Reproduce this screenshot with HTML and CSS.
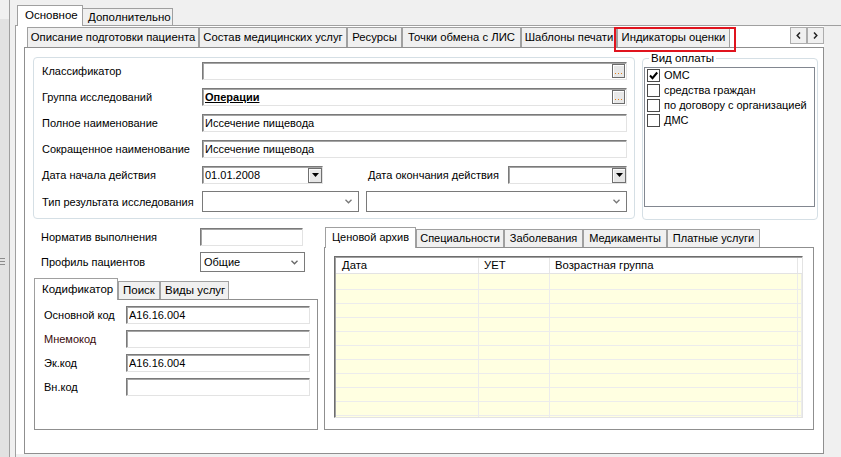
FILE: index.html
```html
<!DOCTYPE html>
<html>
<head>
<meta charset="utf-8">
<link rel="stylesheet" href="styles.css">
</head>
<body>
<div class="app">
  <div class="splitter"><div class="grip"></div></div>
  <div class="outer">
    <div class="otabs">
      <div class="otab active">Основное</div>
      <div class="otab second">Дополнительно</div>
    </div>
    <div class="opage">
      <div class="itabctl">
        <div class="itabs">
          <div class="itab t1">Описание подготовки пациента</div>
          <div class="itab t2">Состав медицинских услуг</div>
          <div class="itab t3">Ресурсы</div>
          <div class="itab t4">Точки обмена с ЛИС</div>
          <div class="itab t5">Шаблоны печати</div>
          <div class="itab t6">Индикаторы оценки</div>
          <div class="scroll">
            <div class="sbtn"><svg width="5" height="7" viewBox="0 0 5 7"><polyline points="4,0.5 1.2,3.5 4,6.5" fill="none" stroke="#222" stroke-width="1.5"/></svg></div>
            <div class="sbtn"><svg width="5" height="7" viewBox="0 0 5 7"><polyline points="1,0.5 3.8,3.5 1,6.5" fill="none" stroke="#222" stroke-width="1.5"/></svg></div>
          </div>
        </div>
        <div class="ipage">
          <div class="toprow">
            <div class="group1">
              <div class="frow">
                <div class="lbl">Классификатор</div>
                <div class="inp grow"><span class="val"></span><span class="ellip"><span class="dots"></span></span></div>
              </div>
              <div class="frow">
                <div class="lbl">Группа исследований</div>
                <div class="inp grow"><span class="val bold">Операции</span><span class="ellip"><span class="dots"></span></span></div>
              </div>
              <div class="frow">
                <div class="lbl">Полное наименование</div>
                <div class="inp grow"><span class="val">Иссечение пищевода</span></div>
              </div>
              <div class="frow">
                <div class="lbl">Сокращенное наименование</div>
                <div class="inp grow"><span class="val">Иссечение пищевода</span></div>
              </div>
              <div class="frow">
                <div class="lbl">Дата начала действия</div>
                <div class="inp date1"><span class="val">01.01.2008</span><span class="ddbtn"><svg width="7" height="4" viewBox="0 0 7 4"><polygon points="0,0 7,0 3.5,4" fill="#000"/></svg></span></div>
                <div class="lbl2">Дата окончания действия</div>
                <div class="inp grow"><span class="val"></span><span class="ddbtn"><svg width="7" height="4" viewBox="0 0 7 4"><polygon points="0,0 7,0 3.5,4" fill="#000"/></svg></span></div>
              </div>
              <div class="frow crow">
                <div class="lbl">Тип результата исследования</div>
                <div class="combo c1"><span class="val"></span><svg class="chev" width="7" height="5" viewBox="0 0 7 5"><polyline points="0.5,0.8 3.5,3.8 6.5,0.8" fill="none" stroke="#777" stroke-width="1.3"/></svg></div>
                <div class="combo grow c2"><span class="val"></span><svg class="chev" width="7" height="5" viewBox="0 0 7 5"><polyline points="0.5,0.8 3.5,3.8 6.5,0.8" fill="none" stroke="#777" stroke-width="1.3"/></svg></div>
              </div>
            </div>
            <fieldset class="pay">
              <legend>Вид оплаты</legend>
              <div class="lb">
                <div class="lbi"><span class="cb"><svg width="11" height="11" viewBox="0 0 11 11"><polyline points="2,5.5 4.5,8.2 9.2,2.5" fill="none" stroke="#000" stroke-width="2"/></svg></span><span class="lbt">ОМС</span></div>
                <div class="lbi"><span class="cb"></span><span class="lbt">средства граждан</span></div>
                <div class="lbi"><span class="cb"></span><span class="lbt">по договору с организацией</span></div>
                <div class="lbi"><span class="cb"></span><span class="lbt">ДМС</span></div>
              </div>
            </fieldset>
          </div>
          <div class="bottomrow">
            <div class="leftcol">
              <div class="frow r1">
                <div class="lbl lw">Норматив выполнения</div>
                <div class="inp norm"><span class="val"></span></div>
              </div>
              <div class="frow r2">
                <div class="lbl lw">Профиль пациентов</div>
                <div class="combo prof"><span class="val">Общие</span><svg class="chev" width="7" height="5" viewBox="0 0 7 5"><polyline points="0.5,0.8 3.5,3.8 6.5,0.8" fill="none" stroke="#666" stroke-width="1.3"/></svg></div>
              </div>
              <div class="stabs">
                <div class="stab sel s1">Кодификатор</div>
                <div class="stab s2">Поиск</div>
                <div class="stab s3">Виды услуг</div>
              </div>
              <div class="spage">
                <div class="crow2">
                  <div class="clbl">Основной код</div>
                  <div class="inp code"><span class="val">A16.16.004</span></div>
                </div>
                <div class="crow2">
                  <div class="clbl maroon">Мнемокод</div>
                  <div class="inp code"><span class="val"></span></div>
                </div>
                <div class="crow2">
                  <div class="clbl">Эк.код</div>
                  <div class="inp code"><span class="val">A16.16.004</span></div>
                </div>
                <div class="crow2">
                  <div class="clbl">Вн.код</div>
                  <div class="inp code"><span class="val"></span></div>
                </div>
              </div>
            </div>
            <div class="rtabctl">
              <div class="rtabs">
                <div class="rtab sel q1">Ценовой архив</div>
                <div class="rtab q2">Специальности</div>
                <div class="rtab q3">Заболевания</div>
                <div class="rtab q4">Медикаменты</div>
                <div class="rtab q5">Платные услуги</div>
              </div>
              <div class="rpage">
                <div class="grid">
                  <div class="ghead">
                    <div class="gc k1">Дата</div>
                    <div class="gc k2">УЕТ</div>
                    <div class="gc k3">Возрастная группа</div>
                    <div class="gc k4"></div>
                  </div>
                  <div class="grow-r first"><div class="gc k1"></div><div class="gc k2"></div><div class="gc k3"></div><div class="gc k4"></div></div>
                  <div class="grow-r"><div class="gc k1"></div><div class="gc k2"></div><div class="gc k3"></div><div class="gc k4"></div></div>
                  <div class="grow-r"><div class="gc k1"></div><div class="gc k2"></div><div class="gc k3"></div><div class="gc k4"></div></div>
                  <div class="grow-r"><div class="gc k1"></div><div class="gc k2"></div><div class="gc k3"></div><div class="gc k4"></div></div>
                  <div class="grow-r"><div class="gc k1"></div><div class="gc k2"></div><div class="gc k3"></div><div class="gc k4"></div></div>
                  <div class="grow-r"><div class="gc k1"></div><div class="gc k2"></div><div class="gc k3"></div><div class="gc k4"></div></div>
                  <div class="grow-r"><div class="gc k1"></div><div class="gc k2"></div><div class="gc k3"></div><div class="gc k4"></div></div>
                  <div class="grow-r"><div class="gc k1"></div><div class="gc k2"></div><div class="gc k3"></div><div class="gc k4"></div></div>
                  <div class="grow-r"><div class="gc k1"></div><div class="gc k2"></div><div class="gc k3"></div><div class="gc k4"></div></div>
                  <div class="grow-r"><div class="gc k1"></div><div class="gc k2"></div><div class="gc k3"></div><div class="gc k4"></div></div>
                  <div class="grow-r"><div class="gc k1"></div><div class="gc k2"></div><div class="gc k3"></div><div class="gc k4"></div></div>
                </div>
              </div>
            </div>
          </div>
        </div>
      </div>
    </div>
  </div>
</div>
<div class="hl"></div>
</body>
</html>
```

FILE: styles.css
```css
* { box-sizing: border-box; }
html, body { margin: 0; padding: 0; }
body {
  width: 841px; height: 457px; overflow: hidden; position: relative;
  background: #f0f0f0;
  font-family: "Liberation Sans", Arial, sans-serif;
  font-size: 11px; color: #000;
}
.app { display: flex; height: 457px; }
.splitter {
  width: 10px; flex: none;
  background: linear-gradient(#f0f0f0 0 19px, #e2e2e2 19px);
  border-right: 1px solid #a0a0a0;
}
.grip {
  margin-top: 258px; width: 5px; height: 7px;
  background: repeating-linear-gradient(to bottom, #8c8c8c 0 1px, transparent 1px 3px);
}
.outer { flex: 1; display: flex; flex-direction: column; padding-left: 5px; min-width: 0; }
.otabs { height: 25px; flex: none; display: flex; align-items: flex-end; padding-left: 2px; }
.otab {
  height: 17px; border: 1px solid #a0a0a0; border-bottom: none;
  background: #f0f0f0; font-size: 11.5px; line-height: 16px; white-space: nowrap;
}
.otab.active {
  height: 21px; width: 66px; margin-bottom: -1px; padding-left: 7px; line-height: 19px;
  background: #fff; position: relative; z-index: 2;
}
.otab.second { width: 91px; margin-left: -1px; padding-left: 5px; }
.opage {
  flex: 1; border-top: 1px solid #a0a0a0; border-left: 1px solid #a0a0a0;
  background: #f0f0f0;
}
.itabctl {
  width: 808px; height: 428px; background: #fff;
  padding: 1px 0 0 8px; display: flex; flex-direction: column;
}
.itabs { display: flex; height: 20px; flex: none; padding-left: 3px; }
.itab {
  height: 20px; border: 1px solid #a0a0a0; border-bottom: none; background: #f0f0f0;
  font-size: 11.3px; line-height: 19px; text-align: center; white-space: nowrap;
}
.t1 { width: 172px; } .t2 { width: 148px; } .t3 { width: 55px; }
.t4 { width: 119px; } .t5 { width: 96px; } .t6 { width: 113px; }
.scroll { margin-left: auto; display: flex; align-items: flex-start; }
.sbtn {
  width: 17px; height: 17px; border: 1px solid #adadad; background: #f0f0f0;
  display: flex; align-items: center; justify-content: center;
}
.ipage { width: 800px; height: 407px; border: 1px solid #8f8f8f; background: #fff; flex: none; }

.toprow { display: flex; align-items: flex-start; height: 172px; }
.group1 {
  margin: 9px 0 0 8px; width: 602px; height: 162px;
  border: 1px solid #d5dfe5; border-radius: 4px;
  padding: 4px 7px 0 8px;
  display: flex; flex-direction: column; gap: 8px;
}
.frow { display: flex; align-items: center; height: 18px; }
.frow.crow { height: 21px; margin-top: -1px; }
.lbl { width: 160px; flex: none; white-space: nowrap; }
.lbl2 { width: 140px; margin-left: 45px; flex: none; white-space: nowrap; }
.grow { flex: 1; min-width: 0; }
.inp {
  height: 18px; background: #fff;
  border: 1px solid; border-color: #7a7a7a #e3e3e3 #e3e3e3 #7a7a7a;
  box-shadow: inset 1px 1px 0 #a5a5a5;
  display: flex; align-items: center; padding-left: 2px;
}
.val { flex: 1; white-space: nowrap; overflow: hidden; }
.bold { font-weight: bold; text-decoration: underline; }
.ellip {
  width: 13px; height: 14px; margin-right: 1px; flex: none;
  border: 1px solid #6d6d6d; box-shadow: inset 1px 1px 0 #fff;
  background: #e8e8e8; display: flex; align-items: flex-end; justify-content: center;
  padding-bottom: 3px;
}
.dots {
  width: 7px; height: 1px;
  background: repeating-linear-gradient(90deg, #e0801c 0 1px, transparent 1px 3px);
}
.date1 { width: 121px; flex: none; }
.ddbtn {
  width: 14px; height: 15px; margin-right: 0; flex: none;
  border: 1px solid #707070; background: #e6e6e6;
  box-shadow: inset 1px 1px 0 #fafafa;
  display: flex; align-items: center; justify-content: center;
}
.combo {
  height: 21px; border: 1px solid #7a7a7a; background: #fff;
  display: flex; align-items: center; padding: 0 6px 0 3px;
}
.c1 { width: 157px; flex: none; }
.c2 { margin-left: 7px; }
.chev { flex: none; }

.pay {
  margin: 4px 0 0 7px; width: 176px; height: 168px;
  border: 1px solid #d5dfe5; border-radius: 4px;
  padding: 0 2px 0 1px; min-width: 0;
}
.pay legend { padding: 0 2px; margin-left: 5px; font-size: 11.5px; line-height: 12px; }
.lb { margin-top: 3px; height: 140px; border: 1px solid #828790; background: #fff; }
.lbi { height: 15px; display: flex; align-items: flex-start; padding-left: 2px; }
.cb {
  width: 13px; height: 13px; margin-top: 1px; border: 1px solid #4a4a4a; background: #fff;
  display: flex; align-items: center; justify-content: center; flex: none;
}
.lbt { margin-left: 4px; line-height: 15px; white-space: nowrap; }

.bottomrow { display: flex; align-items: flex-start; margin-top: 7px; }
.leftcol { margin-left: 8px; width: 285px; flex: none; display: flex; flex-direction: column; }
.leftcol .frow { height: auto; }
.r1 { margin-top: 1px; }
.r2 { margin-top: 6px; }
.lw { width: 167px; padding-left: 8px; }
.norm { width: 103px; }
.prof { width: 105px; height: 20px; }
.stabs { display: flex; align-items: flex-end; height: 21px; margin: 6px 0 0 1px; }
.stab {
  height: 18px; border: 1px solid #a0a0a0; border-bottom: none; background: #f0f0f0;
  font-size: 11.5px; line-height: 17px; padding-left: 4px; white-space: nowrap;
}
.stab.sel {
  height: 22px; margin-bottom: -1px; background: #fff; position: relative; z-index: 2;
  line-height: 20px; padding-left: 7px;
}
.s1 { width: 84px; } .s2 { width: 42px; } .s3 { width: 69px; padding-left: 4px; }
.spage {
  margin-left: 1px; width: 284px; height: 131px; border: 1px solid #8f8f8f;
  padding: 6px 0 0 9px; display: flex; flex-direction: column; gap: 6px;
}
.crow2 { display: flex; align-items: center; height: 18px; }
.clbl { width: 82px; flex: none; white-space: nowrap; }
.maroon { color: #3a0a0a; }
.code { width: 184px; }

.rtabctl { margin-left: 6px; width: 490px; flex: none; display: flex; flex-direction: column; }
.rtabs { display: flex; align-items: flex-end; height: 20px; margin-left: 1px; }
.rtab {
  height: 18px; border: 1px solid #a0a0a0; border-bottom: none; background: #f0f0f0;
  font-size: 11px; line-height: 17px; text-align: center; white-space: nowrap;
}
.rtab.sel {
  height: 21px; margin-bottom: -1px; background: #fff; position: relative; z-index: 2;
  line-height: 19px;
}
.q1 { width: 91px; } .q2 { width: 88px; } .q3 { width: 79px; } .q4 { width: 84px; } .q5 { width: 93px; }
.rpage {
  width: 490px; height: 183px; border: 1px solid #8f8f8f; background: #fff;
  padding: 8px 0 0 9px;
}
.grid {
  width: 469px; height: 162px; overflow: hidden; background: #ffffe1;
  border: 1px solid; border-color: #6d6d6d #e3e3e3 #e3e3e3 #6d6d6d;
  box-shadow: inset 1px 1px 0 #a0a0a0;
  padding: 1px 0 0 1px;
}
.ghead { display: flex; height: 16px; background: #fff; border-bottom: 1px solid #e3e3e3; }
.ghead .gc { font-size: 11.3px; line-height: 15px; padding-left: 5px; border-right: 1px solid #e6e6e6; white-space: nowrap; }
.ghead .k1 { padding-left: 6px; }
.grow-r { display: flex; height: 14px; border-bottom: 1px solid #ececec; }
.grow-r.first { height: 16px; }
.grow-r .gc { border-right: 1px solid #ececec; }
.k1 { width: 143px; flex: none; }
.k2 { width: 71px; flex: none; }
.k3 { width: 248px; flex: none; }
.k4 { width: 4px; flex: none; }

.hl {
  position: absolute; left: 614px; top: 27px; width: 122px; height: 25px;
  border: 2px solid #e0141e;
}
```
